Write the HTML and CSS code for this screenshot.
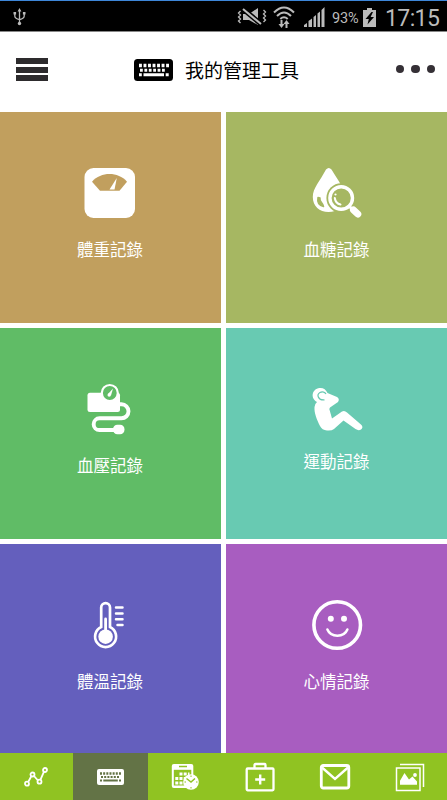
FILE: index.html
```
<!DOCTYPE html>
<html lang="zh-Hant">
<head>
    <meta charset="UTF-8">
    <meta name="viewport" content="width=device-width, initial-scale=1.0">
    <title>我的管理工具</title>
    <link rel="stylesheet" href="styles.css">
</head>
<body>
    <!-- Status bar -->
    <div class="status-bar">
        <svg class="usb-icon" width="13" height="18" viewBox="0 0 13 18" fill="none" stroke="#bbb" stroke-width="1.3">
            <path d="M6.5 2v13M1.8 5v3q0 2.5 4.7 3.6Q11.200 10.500 11.200 8V5"/>
            <path d="M4.600 3.500 6.500 0l1.900 3.500zM.5 4h2.600v2.500H.5zM9.900 4h2.600v2.500H9.900z" fill="#bbb" stroke="none"/>
            <circle cx="6.500" cy="15.500" r="1.700" fill="#bbb" stroke="none"/>
        </svg>
        <div class="status-right">
            <svg class="mute-icon" width="30" height="18" viewBox="0 0 30 18" fill="none" stroke="#bbb">
                <path d="M6 6h6l9-6v17l-9-5H6z" fill="#bbb" stroke="none"/>
                <path d="M6 1 24 16" stroke="#000" stroke-width="5"/>
                <path d="M6 1 24 16" stroke-width="2"/>
                <path d="M3.500 3 1.500 5l2 2-2 2 2 2-2 2 2 2M26.500 2l2 2-2 2 2 2-2 2 2 2-2 2" stroke-width="1.300"/>
            </svg>
            <svg class="wifi-icon" width="22" height="23" viewBox="0 0 22 23" fill="none" stroke="#bbb" stroke-width="2">
                <path d="M1 6.500Q11-3.500 21 6.500M4 10Q11 3 18 10M7.300 13Q11 9.500 14.700 13"/>
                <path d="M8.500 14v5M13.500 22v-5"/>
                <path d="M5.500 18h6l-3 4zM10.500 18h6l-3-4z" fill="#bbb" stroke="none"/>
            </svg>
            <svg class="signal-icon" width="21" height="20" viewBox="0 0 21 20" fill="#bbb">
                <path d="M0 20v-2l3-2v4zM4.500 20v-6L8 11.500V20zM9.500 20V10L12 8v12zM13.500 20V6.500L16 4.500V20zM17.500 20V3L20.500 0v20z"/>
            </svg>
            <span class="battery-level">93%</span>
            <svg class="battery-icon" width="13" height="19" viewBox="0 0 13 19">
                <path d="M4 0h5v2h4v17H0V2h4z" fill="#bbb"/>
                <path d="M8.500 4 2.500 11h3.300L4.500 16.500 11 9H7.600L10 4z" fill="#000"/>
            </svg>
            <span class="clock">17:15</span>
        </div>
    </div>

    <!-- Header -->
    <header class="header">
        <div class="menu-btn"><span></span><span></span><span></span></div>
        <div class="header-title">
            <svg width="39" height="22" viewBox="0 0 39 22">
                <rect width="39" height="22" rx="3.500" fill="#000"/>
                <path d="M5 6.500h30" stroke="#fff" stroke-width="3.500" stroke-dasharray="2.900 1.620"/>
                <path d="M6 11.200h26" stroke="#fff" stroke-width="3" stroke-dasharray="2.800 1.600"/>
                <path d="M5 15.700h2.800M9.500 15.700h20.500M31.700 15.700h3" stroke="#fff" stroke-width="3"/>
            </svg>
            <h1>我的管理工具</h1>
        </div>
        <div class="more-btn"><span></span><span></span><span></span></div>
    </header>

    <!-- Record tiles -->
    <main class="tiles">
        <a class="tile weight">
            <svg class="tile-icon" viewBox="0 0 50 50">
                <rect x="-.5" width="50.500" height="50" rx="9" fill="#fff"/>
                <path d="M7 13.700C16 3.500 33 3.500 42 13.700L34.500 22.800H15z" fill="#c19f5e"/>
                <path d="M24.500 21.500 31.800 10 29.500 21.500z" fill="#fff"/>
            </svg>
            <span class="tile-label">體重記錄</span>
        </a>
        <a class="tile sugar">
            <svg class="tile-icon" viewBox="0 0 50 50">
                <path d="M14 1.500Q16.800-1.500 19.500 1.500C23 8 32 18 32 28.500 32 38 25.500 44 16.500 44S.8 38 .8 29C.8 20 8 13 14 1.500z" fill="#fff"/>
                <path d="M6 29.500Q4.500 37 11.500 38.500 11 36 9.500 34.500 7.500 32.500 8 30z" fill="#a6b762" stroke="#a6b762" stroke-width="1.500" stroke-linejoin="round"/>
                <circle cx="29.200" cy="30" r="14.800" fill="#a6b762"/>
                <circle cx="29.200" cy="30" r="11.300" fill="none" stroke="#fff" stroke-width="3.400"/>
                <path d="M37 38l4 4" stroke="#fff" stroke-width="3"/>
                <path d="M41.500 42 45.800 46" stroke="#fff" stroke-width="7" stroke-linecap="round"/>
                <path d="M22.800 30Q23.500 35.500 28.500 36.500" fill="none" stroke="#fff" stroke-width="2" stroke-linecap="round"/>
                <circle cx="23.500" cy="26.500" r="1.100" fill="#fff"/>
            </svg>
            <span class="tile-label">血糖記錄</span>
        </a>
        <a class="tile pressure">
            <svg class="tile-icon" viewBox="0 0 50 50">
                <rect x="2.500" y="8.700" width="32.500" height="19.300" rx="2.500" fill="#fff"/>
                <path d="M34 20.300h2.500a7 7 0 0 1 0 14h-22a5.850 5.850 0 0 0 0 11.700H30" fill="none" stroke="#fff" stroke-width="3.900"/>
                <rect x="28" y="40.800" width="11.500" height="9.400" rx="4.400" fill="#fff"/>
                <circle cx="24.800" cy="9" r="8" fill="#60bc66" stroke="#fff" stroke-width="2.200"/>
                <path d="M23 10 28 4.500 26 11.500z" fill="#fff"/>
                <circle cx="24.200" cy="11" r="1.700" fill="#fff"/>
            </svg>
            <span class="tile-label">血壓記錄</span>
        </a>
        <a class="tile sport">
            <svg class="tile-icon" viewBox="0 0 50 50">
                <path d="M7.500 4C11 3.500 14 5.500 15.500 9L25 13Q28 15 26 18L18 23.500 17.300 25 20 34.500 30 27.500Q32.500 26 35 28.500L49.500 41Q51.500 43.500 49 45.500 46.500 47 43.500 45L31.500 36.500 22 45Q19.500 47 15 46.500 10 46 8 42C5 36 2 29 2.500 23Q3 19.500 5 18C-2 14 0 5 7.500 4z" fill="#fff"/>
                <path d="M12.500 15.800C6.500 16.500 4 11 8 8.500 10.500 7.200 13 8.300 14 10" fill="none" stroke="#68cab2" stroke-width="1.200"/>
            </svg>
            <span class="tile-label">運動記錄</span>
        </a>
        <a class="tile temperature">
            <svg class="tile-icon" viewBox="0 0 50 50" fill="none" stroke="#fff">
                <path d="M16.200 27V7.500a4.400 4.400 0 0 1 8.800 0V27a10.500 10.500 0 1 1-8.800 0z" stroke-width="2.700"/>
                <path d="M20.600 19v18" stroke-width="2.800" stroke-linecap="round"/>
                <circle cx="20.600" cy="36.700" r="7.300" fill="#fff" stroke="none"/>
                <path d="M31 7.500h6.500M31 13.400h6.500M31 19.300h6.500M32.500 25.100h5" stroke-width="2.500" stroke-linecap="round"/>
            </svg>
            <span class="tile-label">體溫記錄</span>
        </a>
        <a class="tile mood">
            <svg class="tile-icon" viewBox="0 0 50 50" fill="none" stroke="#fff">
                <circle cx="25.200" cy="25" r="23.300" stroke-width="3.600"/>
                <circle cx="18.800" cy="18.700" r="3" fill="#fff" stroke="none"/>
                <circle cx="32" cy="18.700" r="3" fill="#fff" stroke="none"/>
                <path d="M15.400 29.500Q18 35.700 25.400 35.700T35.400 29.500" stroke-width="2.500" stroke-linecap="round"/>
            </svg>
            <span class="tile-label">心情記錄</span>
        </a>
    </main>

    <!-- Bottom navigation -->
    <nav class="nav">
        <a class="nav-item">
            <svg width="24" height="20" viewBox="0 0 24 20" fill="none" stroke="#fff" stroke-width="1.800">
                <path d="M4.200 15 7.300 9.300M10 9l4 4.500M16.500 12.700 20 4.700"/>
                <circle cx="3" cy="16.700" r="2"/>
                <circle cx="8.500" cy="7.500" r="2"/>
                <circle cx="15.500" cy="14.700" r="2"/>
                <circle cx="21" cy="3" r="2"/>
            </svg>
        </a>
        <a class="nav-item active">
            <svg width="27" height="16" viewBox="0 0 27 16">
                <rect width="27" height="16" rx="2" fill="#fff"/>
                <path d="M3 4.500h21" stroke="#637346" stroke-width="2.300" stroke-dasharray="2 1.160"/>
                <path d="M4 8h19" stroke="#637346" stroke-width="2" stroke-dasharray="2 1.200"/>
                <path d="M3 11.500h2M6.300 11.500h14.500M22 11.500h2" stroke="#637346" stroke-width="2"/>
            </svg>
        </a>
        <a class="nav-item">
            <svg width="28" height="27" viewBox="0 0 28 27">
                <rect x=".8" y="1" width="21.500" height="24" rx="2" fill="#fff"/>
                <path d="M8 3.500h8" stroke="#90c322" stroke-width="1.500"/>
                <path d="M2.800 6.800h17.500v15.700H2.800z" fill="#90c322"/>
                <path d="M8.500 11h10M4.300 15.500h10M4.300 20h10" stroke="#fff" stroke-width="3" stroke-dasharray="3 1.200"/>
                <circle cx="20" cy="19" r="7.800" fill="#fff"/>
                <path d="M15.500 15.500 20 19l4-3.500" fill="none" stroke="#90c322" stroke-width="1.500"/>
                <path d="M20 12.500v1.500M20 24v1.500M13.500 19H15M25 19h1.500" stroke="#90c322"/>
            </svg>
        </a>
        <a class="nav-item">
            <svg width="30" height="30" viewBox="0 0 30 30" fill="none" stroke="#fff" stroke-width="2.300">
                <rect x="1.700" y="6.500" width="26.800" height="21.800" rx="1"/>
                <path d="M9.500 6V3q0-1 1-1h9q1 0 1 1v3"/>
                <path d="M15.200 12.500v10M10.200 17.500h10" stroke-width="2.400"/>
            </svg>
        </a>
        <a class="nav-item">
            <svg width="32" height="26" viewBox="0 0 32 26" fill="none" stroke="#fff">
                <rect x="2.300" y="1.500" width="27.500" height="22.500" rx="2" stroke-width="2.800"/>
                <path d="M3 3.500 16 15 29 3.500" stroke-width="2.400"/>
            </svg>
        </a>
        <a class="nav-item">
            <svg width="30" height="30" viewBox="0 0 30 30" fill="none" stroke="#fff">
                <path d="M5 2.500h23.500V25" stroke-width="1.500"/>
                <rect x="1.500" y="6" width="23.500" height="22.500" stroke-width="1.500"/>
                <path d="M5 22.800v-4L9.500 11l4.500 6.500 3.500-3L22 19.500v3.300z" fill="#fff" stroke="none"/>
                <circle cx="20" cy="13" r="1.900" fill="#fff" stroke="none"/>
            </svg>
        </a>
    </nav>
</body>
</html>
```

FILE: styles.css
```
* {
    box-sizing: border-box;
}

body {
    margin: 0;
    height: 800px;
    display: flex;
    flex-direction: column;
    background-color: #fff;
    font-family: "Noto Sans CJK TC", sans-serif;
    overflow: hidden;
}

svg {
    display: block;
    flex-shrink: 0;
}

/* Status bar */
.status-bar {
    height: 32px;
    display: flex;
    justify-content: space-between;
    align-items: center;
    padding: 2px 8px 0 13px;
    background-color: #000;
    border-top: 1px solid #3d86d8;
    border-bottom: 1px solid #888;
    color: #bbb;
    font-family: Roboto, sans-serif;
}

.status-right {
    display: flex;
    align-items: center;
}

.wifi-icon {
    margin-left: 6px;
}

.signal-icon {
    margin-left: 9px;
}

.battery-level {
    width: 27px;
    margin-left: 7px;
    padding-top: 2px;
    font-size: 14.5px;
    letter-spacing: -0.2px;
    white-space: nowrap;
}

.battery-icon {
    margin-left: 4px;
}

.clock {
    width: 54px;
    margin-left: 9px;
    padding-top: 3px;
    font-size: 23px;
    letter-spacing: -0.6px;
    line-height: 28px;
    white-space: nowrap;
}

/* Header */
.header {
    height: 80px;
    display: flex;
    align-items: center;
    padding: 0 12px 4px 16px;
}

.menu-btn {
    width: 32px;
    display: flex;
    flex-direction: column;
    gap: 2.5px;
    padding-bottom: 1px;
}

.menu-btn span {
    height: 6px;
    background-color: #2d2b2d;
}

.header-title {
    display: flex;
    align-items: center;
    gap: 12px;
    margin-left: 86px;
}

.header-title h1 {
    margin: 0;
    font-size: 19px;
    font-weight: 400;
    line-height: 28px;
    color: #000;
}

.more-btn {
    display: flex;
    gap: 7px;
    margin-left: auto;
    padding-bottom: 2px;
}

.more-btn span {
    width: 8.5px;
    height: 8.5px;
    border-radius: 50%;
    background-color: #353036;
}

/* Tiles */
.tiles {
    flex: 1;
    display: grid;
    grid-template-columns: 1fr 1fr;
    grid-template-rows: 211px 211px 1fr;
    gap: 5px;
}

.tile {
    display: flex;
    flex-direction: column;
    align-items: center;
    padding-top: 56px;
}

.tile-icon {
    width: 50px;
    height: 50px;
    overflow: visible;
}

.tile-label {
    margin-top: 19px;
    font-size: 16.5px;
    line-height: 24px;
    color: #fff;
}

.weight { background-color: #c19f5e; }
.sugar { background-color: #a6b762; }
.pressure { background-color: #60bc66; }
.sport { background-color: #68cab2; }
.temperature { background-color: #645fbd; }
.mood { background-color: #a85dc0; }

.weight,
.pressure,
.temperature {
    padding-right: 1px;
}

.sport .tile-label {
    margin-top: 15px;
}

/* Bottom navigation */
.nav {
    height: 47px;
    display: grid;
    grid-template-columns: 73px repeat(4, 75px) 1fr;
    background-color: #90c322;
}

.nav-item {
    display: flex;
    justify-content: center;
    align-items: center;
    padding-right: 1px;
}

.nav-item.active {
    background-color: #637346;
}
```
